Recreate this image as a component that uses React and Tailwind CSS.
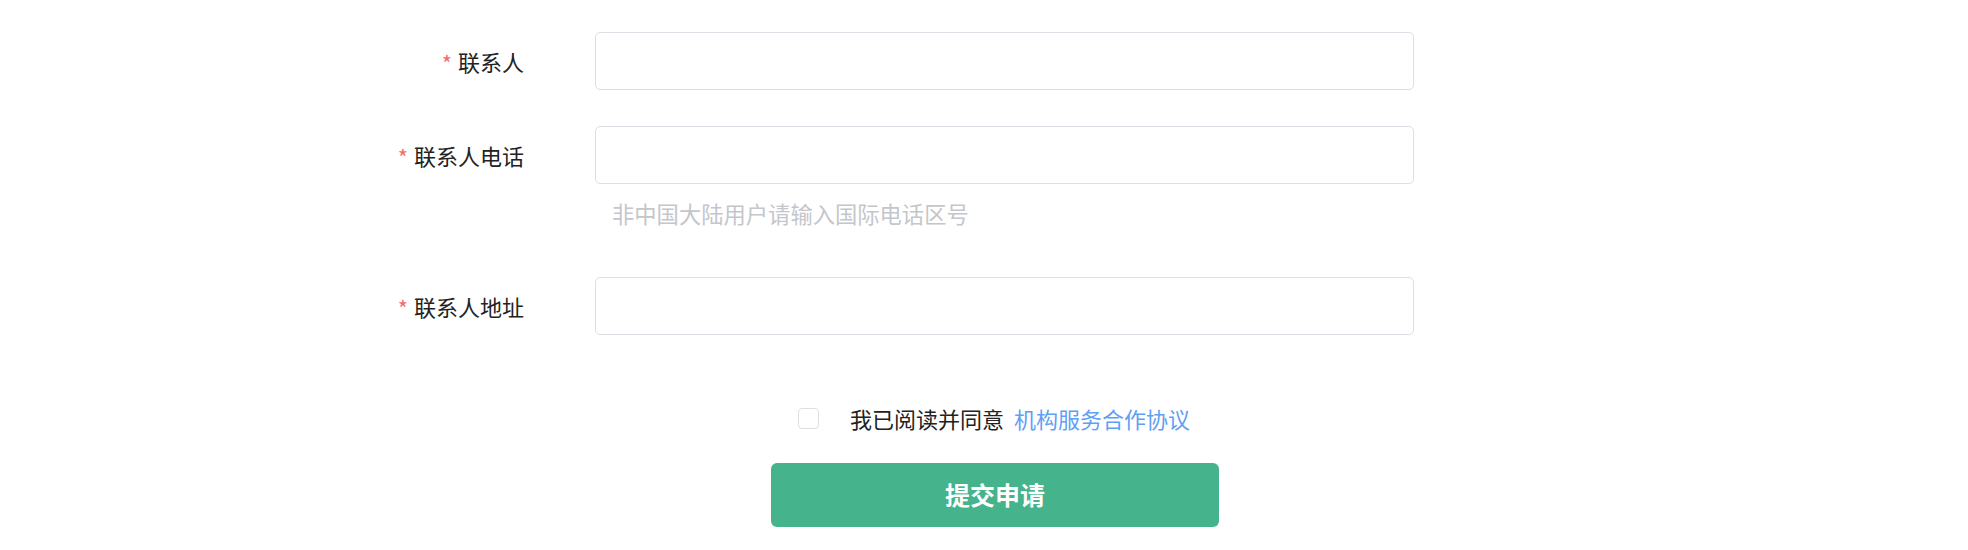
const font = { fontFamily: '"Noto Sans CJK SC", "Noto Sans", sans-serif' };

const Field = ({ label, children }) => (
  <div className="flex items-center">
    <label className="w-[261px] shrink-0 pr-[71px] flex justify-end items-center text-[22px] leading-[30px] text-[#222] whitespace-nowrap">
      <span className="text-[#f56c6c] text-[22px] leading-[22px] mr-[6px] mt-[2px]">*</span>
      <span>{label}</span>
    </label>
    {children}
  </div>
);

const Input = () => (
  <input
    type="text"
    className="w-[819px] h-[58px] rounded-[5px] border border-[#dcdfe6] bg-white px-4 text-[20px] outline-none"
  />
);

export default function App() {
  return (
    <div className="w-full h-[550px] bg-white" style={font}>
      <div className="pl-[334px] pt-[32px]">
        <Field label="联系人">
          <Input />
        </Field>

        <div className="mt-[36px]">
          <Field label="联系人电话">
            <Input />
          </Field>
        </div>
        <div className="mt-[16px] pl-[278px] text-[22.3px] leading-[26px] text-[#c4c6cb]">
          非中国大陆用户请输入国际电话区号
        </div>

        <div className="mt-[51px]">
          <Field label="联系人地址">
            <Input />
          </Field>
        </div>

        <div className="mt-[68px] flex items-center h-[30px] pl-[464px]">
          <span className="w-[21px] h-[21px] rounded-[4px] border border-[#dcdfe6] bg-white shrink-0" />
          <span className="ml-[31px] text-[22px] text-[#222]">我已阅读并同意</span>
          <a className="ml-[10px] text-[22px] text-[#5f9ff5]">机构服务合作协议</a>
        </div>

        <button className="mt-[30px] ml-[437px] w-[448px] h-[64px] rounded-[6px] bg-[#45b38b] text-white text-[25px] font-bold flex items-center justify-center">
          提交申请
        </button>
      </div>
    </div>
  );
}
